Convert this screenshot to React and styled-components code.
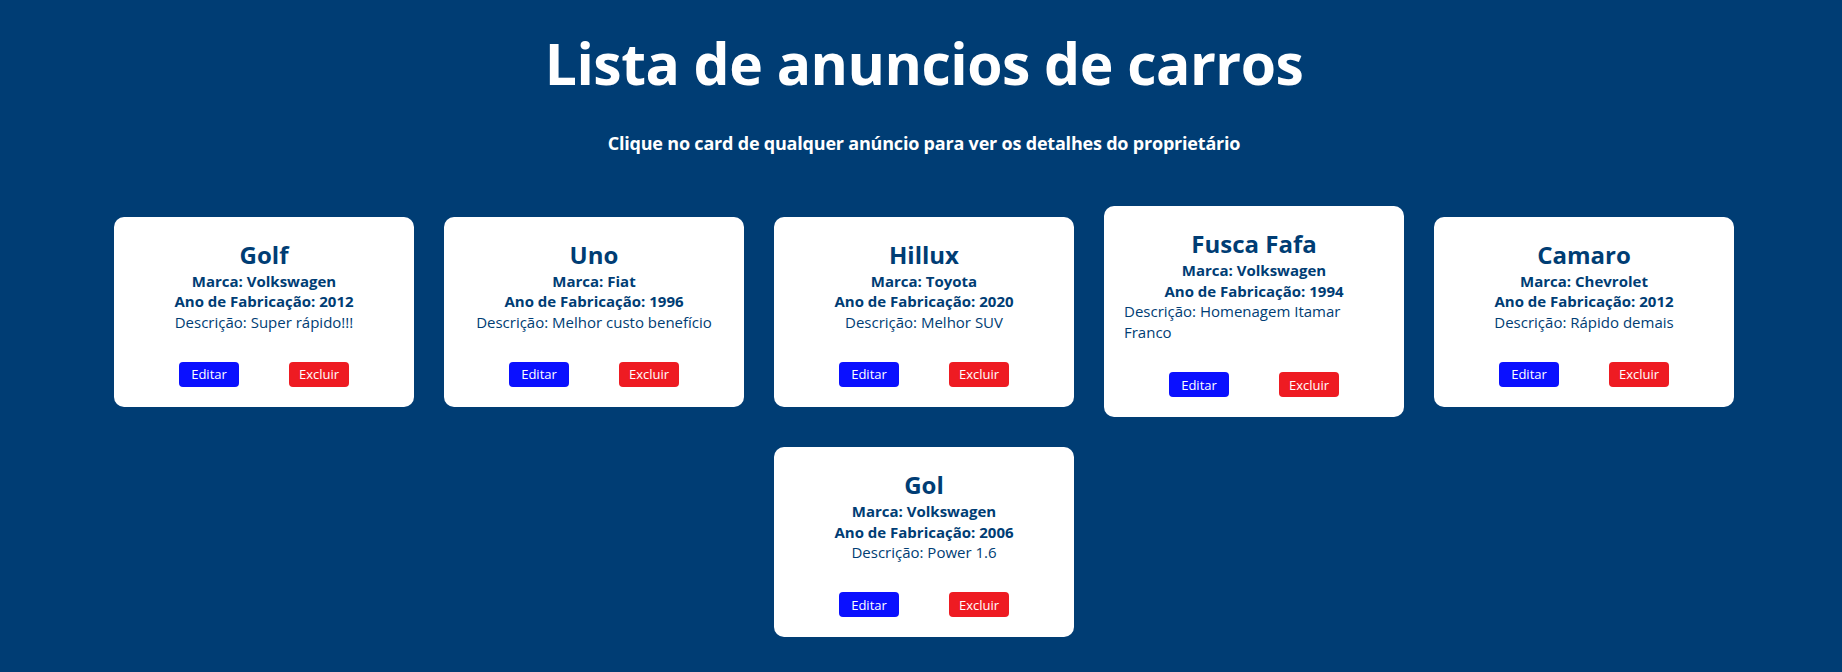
import styled, { createGlobalStyle } from 'styled-components'

const anuncios = [
  { id: 1, modelo: 'Golf', marca: 'Volkswagen', ano: 2012, descricao: 'Super rápido!!!' },
  { id: 2, modelo: 'Uno', marca: 'Fiat', ano: 1996, descricao: 'Melhor custo benefício' },
  { id: 3, modelo: 'Hillux', marca: 'Toyota', ano: 2020, descricao: 'Melhor SUV' },
  { id: 4, modelo: 'Fusca Fafa', marca: 'Volkswagen', ano: 1994, descricao: 'Homenagem Itamar Franco' },
  { id: 5, modelo: 'Camaro', marca: 'Chevrolet', ano: 2012, descricao: 'Rápido demais' },
  { id: 6, modelo: 'Gol', marca: 'Volkswagen', ano: 2006, descricao: 'Power 1.6' },
]

export default function App() {
  return (
    <>
      <GlobalStyle />
      <Container>
        <Titulo>Lista de anuncios de carros</Titulo>
        <Subtitulo>Clique no card de qualquer anúncio para ver os detalhes do proprietário</Subtitulo>
        <Lista>
          {anuncios.map((a) => (
            <Card key={a.id}>
              <Modelo>{a.modelo}</Modelo>
              <Info>{`Marca: ${a.marca}`}</Info>
              <Info>{`Ano de Fabricação: ${a.ano}`}</Info>
              <Descricao>{`Descrição: ${a.descricao}`}</Descricao>
              <Botoes>
                <Botao cor="#0a10ff">Editar</Botao>
                <Botao cor="#ee1b22">Excluir</Botao>
              </Botoes>
            </Card>
          ))}
        </Lista>
      </Container>
    </>
  )
}

const GlobalStyle = createGlobalStyle`
  * {
    box-sizing: border-box;
  }
  body {
    margin: 0;
    background: #003d74;
    font-family: 'Open Sans', 'Noto Sans', sans-serif;
  }
`

const Container = styled.div`
  min-height: 100vh;
  background: #003d74;
  padding: 23px 0 20px 6px;
  display: flex;
  flex-direction: column;
  align-items: center;
`

const Titulo = styled.h1`
  margin: 0;
  font-size: 57px;
  font-weight: 700;
  line-height: 80px;
  letter-spacing: -0.5px;
  color: #ffffff;
`

const Subtitulo = styled.p`
  margin: 28px 0 0;
  font-size: 18px;
  font-weight: 700;
  line-height: 25px;
  letter-spacing: -0.2px;
  color: #ffffff;
`

const Lista = styled.div`
  margin-top: 35px;
  display: flex;
  flex-wrap: wrap;
  justify-content: center;
  align-items: center;
  width: 100%;
`

const Card = styled.div`
  width: 300px;
  margin: 15px;
  padding: 21px 15px 20px;
  background: #ffffff;
  border-radius: 10px;
  display: flex;
  flex-direction: column;
  align-items: center;
  color: #003d74;
  cursor: pointer;
`

const Modelo = styled.h2`
  margin: 0;
  font-size: 24px;
  font-weight: 700;
  line-height: 33px;
`

const Info = styled.p`
  margin: 0;
  font-size: 15px;
  font-weight: 700;
  line-height: 20.5px;
`

const Descricao = styled.p`
  margin: 0 5px;
  font-size: 15px;
  line-height: 21px;
`

const Botoes = styled.div`
  margin-top: 29px;
  width: 100%;
  display: flex;
  justify-content: space-evenly;
`

const Botao = styled.button`
  width: 60px;
  height: 25px;
  border: 0;
  border-radius: 4px;
  background: ${(p) => p.cor};
  color: #ffffff;
  font-family: inherit;
  font-size: 13px;
  cursor: pointer;
`
